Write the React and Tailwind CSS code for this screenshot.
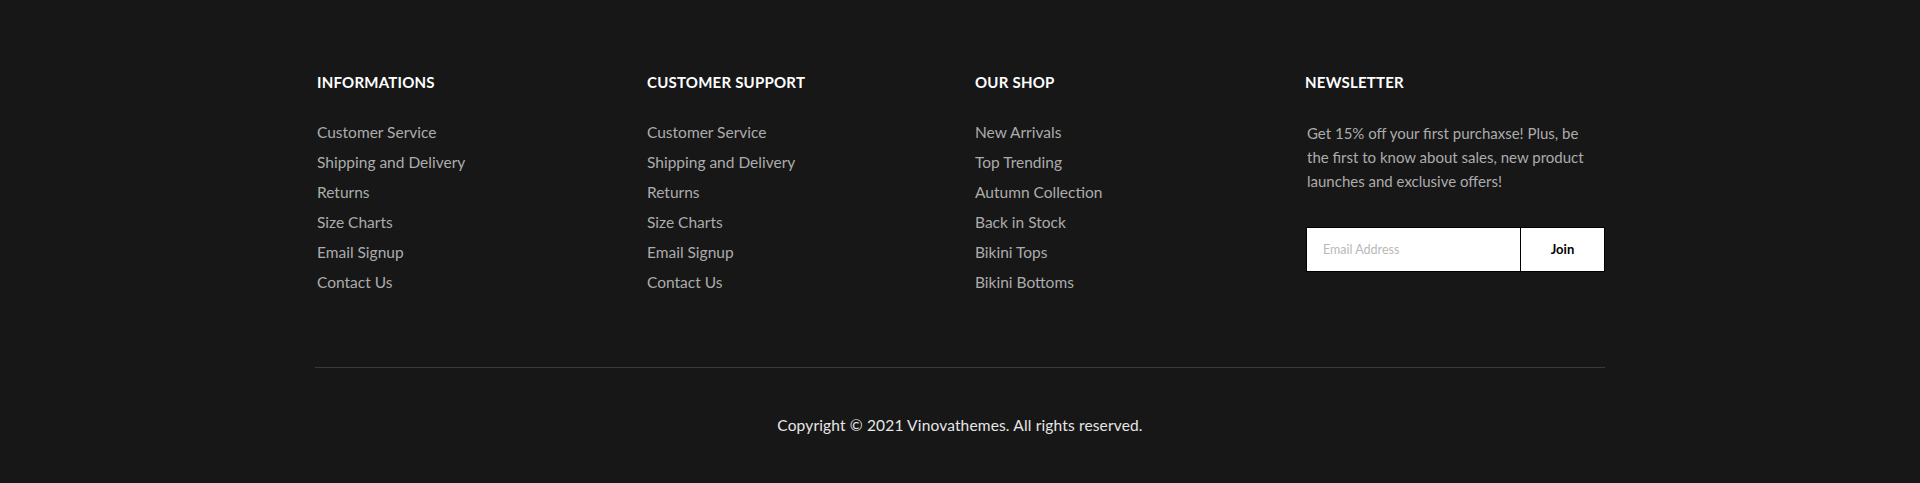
import React from "react";

const info = ["Customer Service", "Shipping and Delivery", "Returns", "Size Charts", "Email Signup", "Contact Us"];
const shop = ["New Arrivals", "Top Trending", "Autumn Collection", "Back in Stock", "Bikini Tops", "Bikini Bottoms"];

function Col({ title, items, pad = "pl-[2px]" }) {
  return (
    <div className={`w-[300px] ${pad}`}>
      <h3 className="text-[15px] leading-[20px] font-bold text-white uppercase tracking-[0.015em]">{title}</h3>
      <ul className="mt-[25px]">
        {items.map((t) => (
          <li key={t} className="text-[15.5px] leading-[30px] text-[#acacac]">
            <a href="#">{t}</a>
          </li>
        ))}
      </ul>
    </div>
  );
}

export default function App() {
  return (
    <div className="w-full h-[483px] bg-[#171717]" style={{ fontFamily: "Lato, 'Noto Sans', sans-serif" }}>
      <div className="w-[1290px] mx-auto pt-[72px]">
        <div className="flex gap-[30px]">
          <Col title="Informations" items={info} />
          <Col title="Customer Support" items={info} />
          <Col title="Our Shop" items={shop} pad="pl-0" />
          <div className="w-[300px]">
            <h3 className="text-[15px] leading-[20px] font-bold text-white uppercase tracking-[0.015em]">Newsletter</h3>
            <p className="mt-[29px] pl-[2px] pr-[6px] text-[15px] leading-[24px] text-[#acacac]">
              Get 15% off your first purchaxse! Plus, be the first to know about sales, new product launches and exclusive offers!
            </p>
            <form className="mt-[34px] ml-[1px] flex h-[45px] border border-black bg-white" onSubmit={(e) => e.preventDefault()}>
              <input
                type="text"
                placeholder="Email Address"
                className="w-[214px] h-full px-[16px] text-[12.5px] text-black placeholder:text-[#b8b8b8] outline-none bg-white border-r border-black"
              />
              <button type="submit" className="flex-1 h-full text-[13px] font-bold text-black">Join</button>
            </form>
          </div>
        </div>
        <div className="mt-[70px] h-px bg-[#3a3a3a]" />
        <p className="mt-[46px] text-center text-[15.5px] leading-[22px] tracking-[0.01em] text-[#e6e6e6]">
          Copyright © 2021 Vinovathemes. All rights reserved.
        </p>
      </div>
    </div>
  );
}
